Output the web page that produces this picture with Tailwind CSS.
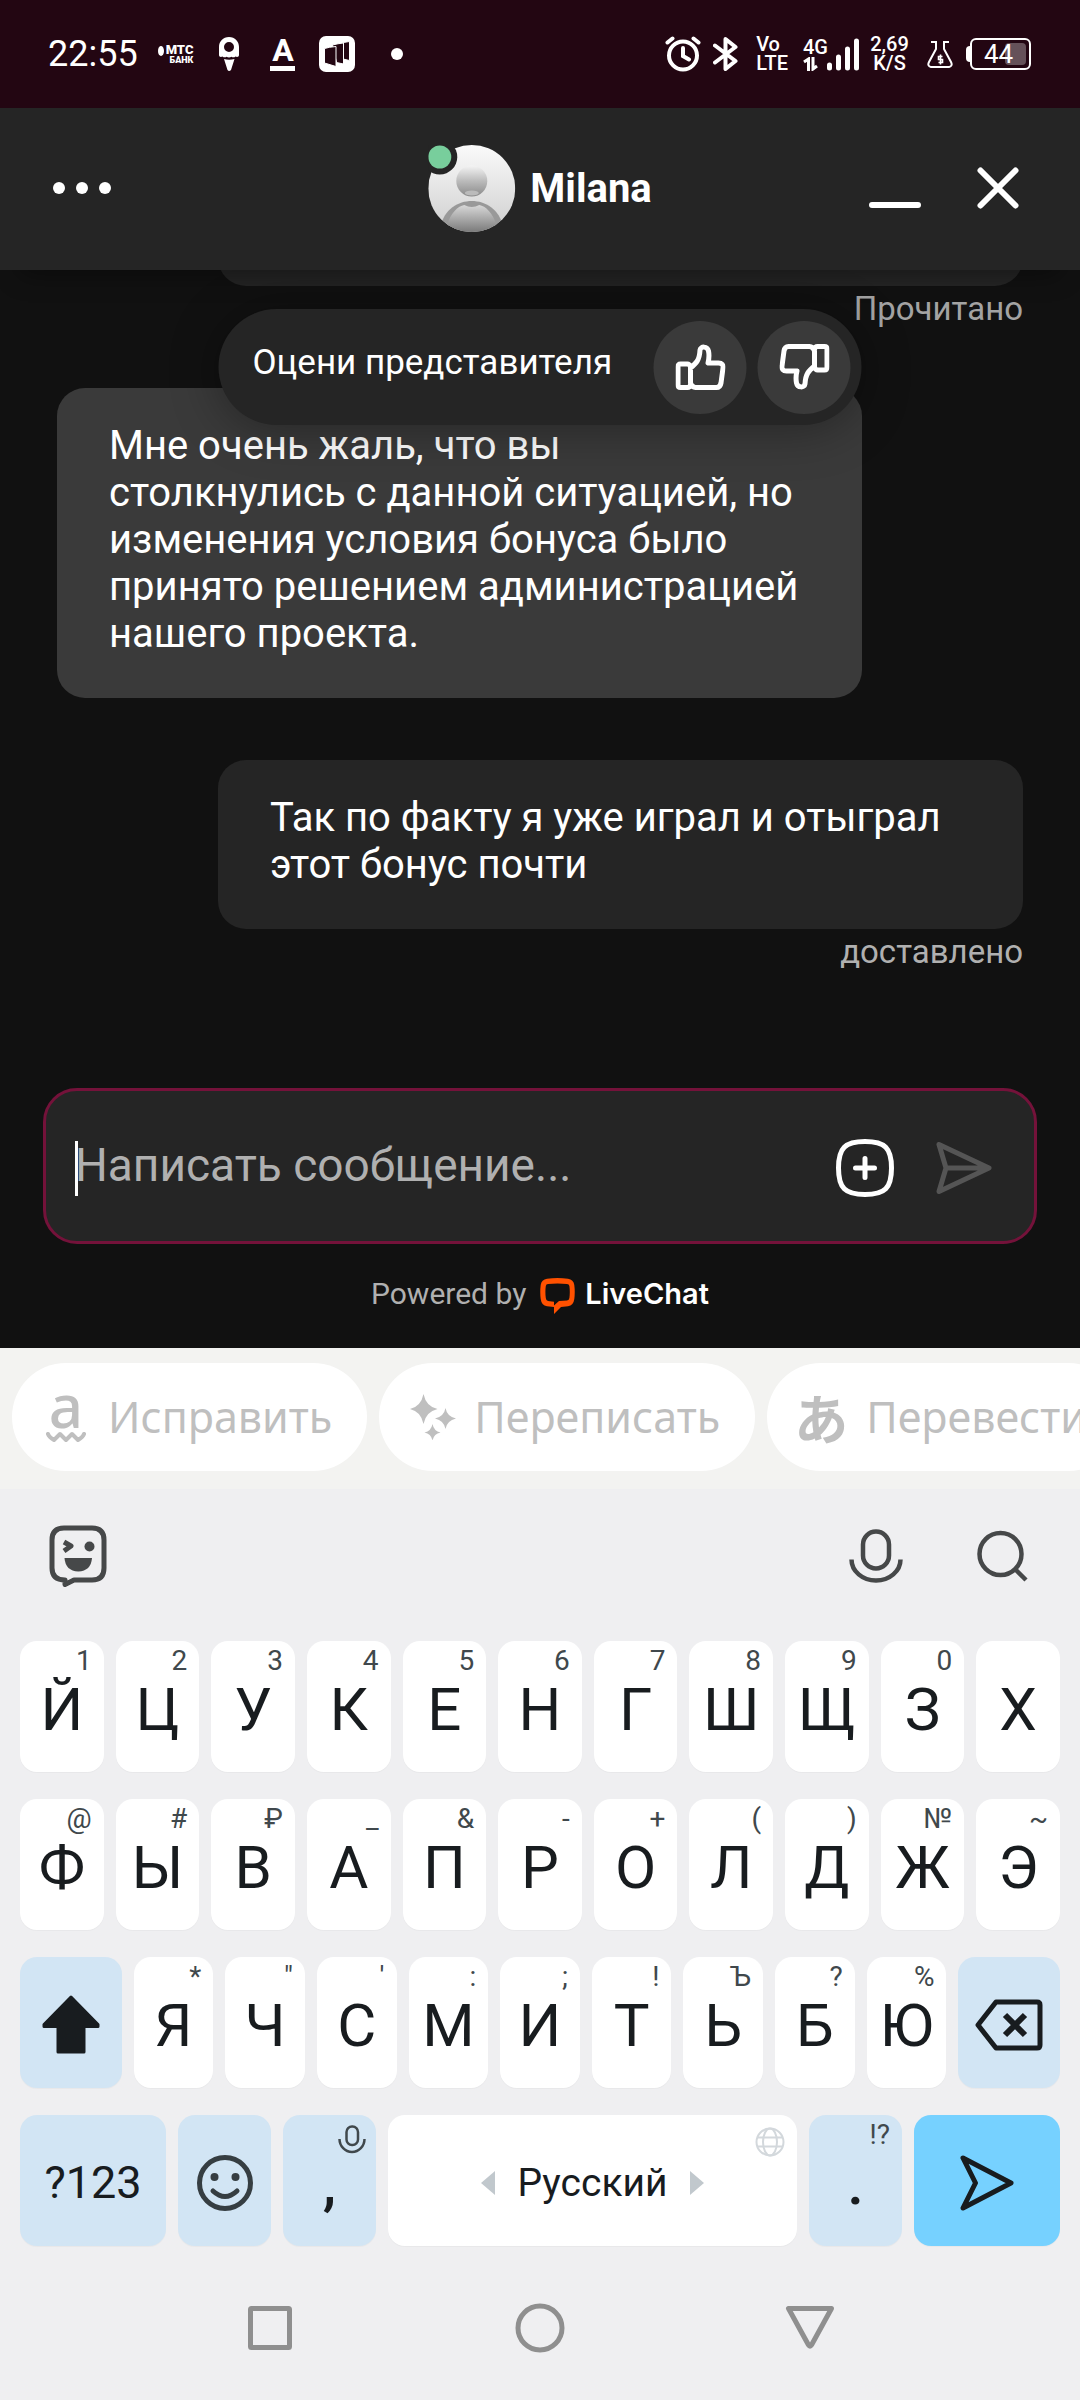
<!DOCTYPE html>
<html lang="ru">
<head>
<meta charset="utf-8">
<meta name="viewport" content="width=device-width, initial-scale=1">
<title>Milana – LiveChat</title>
<script src="https://cdn.jsdelivr.net/npm/@tailwindcss/browser@4"></script>
</head>
<body class="flex min-h-screen flex-col overflow-x-hidden bg-[#efeff1] font-[Roboto,sans-serif]">

<!-- Status bar -->
<div class="flex h-[108px] shrink-0 items-center justify-between bg-[#230612] pr-[49px] pl-12 text-white">
  <div class="flex items-center">
    <span class="mr-5 text-[36px] leading-10">22:55</span>
    <span class="mr-[26px] flex items-start gap-[2px] font-black">
      <svg class="mt-[2px]" width="6" height="10" viewBox="0 0 6 10"><ellipse cx="3" cy="5" rx="3" ry="5" fill="#fff"/></svg>
      <span class="flex flex-col items-end"><span class="text-[13px] leading-3">МТС</span><span class="text-[9px] leading-[9px]">БАНК</span></span>
    </span>
    <svg class="mr-[31px]" width="20" height="34" viewBox="0 0 20 34"><path fill="#fff" fill-rule="evenodd" d="M10 0C4 0 0 4.500 0 10v8c0 2 2 2.500 3.500 1.500 1 1 3 1.200 4 .3 1.500 1 3.500 1 5 0 1 .9 3 .7 4-.3C18 20.500 20 20 20 18v-8C20 4.500 16 0 10 0zm0 5a5 5 0 1 1 0 10 5 5 0 0 1 0-10z"/><path fill="#fff" d="M5 22q5 1.500 10.500 0L12 33q-2 2-3.500 0z"/></svg>
    <span class="mr-6 flex w-[25px] flex-col items-center"><span class="text-[32px] leading-[26px] font-bold">A</span><span class="mt-[3px] h-[5px] w-full bg-white"></span></span>
    <svg class="mr-9" width="36" height="36" viewBox="0 0 36 36"><rect width="36" height="36" rx="7" fill="#fff"/><g fill="#230612" stroke="#fff" stroke-width="1"><path d="M21 7.500Q26 6 30.500 5.500V24.500L24 23z"/><path d="M13.500 9Q19 7.500 24.500 7V28L17.500 26.500z"/><path d="M5.500 12.500Q10 11 17 10.500V30.500L5.500 27z"/></g></svg>
    <span class="size-3 rounded-full bg-white"></span>
  </div>
  <div class="flex items-center font-medium">
    <svg class="mr-3" width="36" height="36" viewBox="0 0 36 36" fill="none" stroke="#fff" stroke-width="4" stroke-linecap="round"><circle cx="18" cy="19.500" r="14"/><path d="M18 12v8l6 3.500M2.500 6.500L7.500 2.500M33.500 6.500L28.500 2.500"/></svg>
    <svg class="mr-[18px]" width="25" height="36" viewBox="0 0 25 36" fill="none" stroke="#fff" stroke-width="4" stroke-linejoin="round" stroke-linecap="round"><path d="M2 9.500L22.500 25 12.500 33V3l10 8L2 26.500"/></svg>
    <span class="mr-[15px] flex flex-col text-[20px] leading-[19px]"><span>Vo</span><span>LTE</span></span>
    <span class="flex h-[34px] w-[56px] items-end">
      <span class="flex w-6 flex-col"><span class="text-[20px] leading-[19px]">4G</span>
        <svg width="15" height="14" viewBox="0 0 15 14" fill="none" stroke="#fff" stroke-width="3"><path d="M5.500 14V2L1 5M10 0v12l4-3"/></svg></span>
      <svg width="32" height="34" viewBox="0 0 32 34" fill="none" stroke="#fff" stroke-width="5" stroke-linecap="round"><path d="M2.500 28v3M11.500 20v11M20.500 12v19M29.500 4v27"/></svg>
    </span>
    <span class="ml-[11px] flex w-[39px] flex-col items-center text-[20px] leading-[19px]"><span>2,69</span><span>K/S</span></span>
    <svg class="ml-[18px]" width="26" height="28" viewBox="0 0 26 28" fill="none" stroke="#fff" stroke-width="2"><path d="M4 2h5v7L2 22q-2 4 2 5h18q4-1 2-5L17 9V2h5"/><path d="M15.500 16.500h-4v3h4v3h-4M13.500 14.500v10" stroke-width="1.600"/></svg>
    <span class="ml-[13px] h-4 w-[4px] rounded-l bg-white"></span>
    <span class="relative flex h-8 w-[61px] items-center justify-center rounded-md border-2 border-white font-normal">
      <span class="absolute top-[3px] right-[3px] h-[22px] w-[21px] rounded-sm bg-white/30"></span>
      <span class="relative mr-1 text-[26px] leading-7">44</span>
    </span>
  </div>
</div>

<!-- Chat -->
<div class="flex grow flex-col bg-[#111]">
  <header class="relative z-10 flex h-[162px] shrink-0 items-center justify-between bg-[#252525] px-[53px] pb-[2px] text-white shadow-[0_24px_24px_-20px_rgba(0,0,0,0.4)]">
    <button aria-label="Меню" class="flex gap-[11px]"><span class="size-3 rounded-full bg-white"></span><span class="size-3 rounded-full bg-white"></span><span class="size-3 rounded-full bg-white"></span></button>
    <div class="absolute left-1/2 flex -translate-x-1/2 items-center gap-[15px]">
      <svg width="87" height="87" viewBox="0 0 87 87">
        <defs>
          <linearGradient id="bg" x2="0" y2="1"><stop stop-color="#fafafa"/><stop offset="1" stop-color="#cfcfcf"/></linearGradient>
          <linearGradient id="hd" x2="0" y2="1"><stop stop-color="#f4f4f4"/><stop offset=".5" stop-color="#bbb"/><stop offset="1" stop-color="#8a8a8a"/></linearGradient>
          <linearGradient id="bd" x2="0" y2="1"><stop stop-color="#d8d8d8"/><stop offset="1" stop-color="#707070"/></linearGradient>
          <clipPath id="c"><circle cx="43.500" cy="43.500" r="43.500"/></clipPath>
        </defs>
        <g clip-path="url(#c)"><rect width="87" height="87" fill="url(#bg)"/>
          <circle cx="43.500" cy="36" r="15.500" fill="url(#hd)"/><ellipse cx="43.500" cy="48" rx="7" ry="2.500" fill="#bbb"/>
          <path d="M12 82C16 64 30 56 43.500 56S71 64 75 82L60 90H26z" fill="#999"/>
          <path d="M19 80C22 68 30 61 36 60q7.500 4 15 0c6 1 14 8 17 20l-10 10H28z" fill="url(#bd)"/></g>
        <circle cx="11.500" cy="12" r="17.500" fill="#252525"/><circle cx="11.500" cy="12" r="11.500" fill="#78ce9c"/>
      </svg>
      <span class="text-[40px] leading-[47px] font-bold">Milana</span>
    </div>
    <div class="flex items-center gap-14 pr-2">
      <button aria-label="Свернуть"><svg width="52" height="42" viewBox="0 0 52 42"><rect y="35" width="52" height="6" rx="3" fill="#fff"/></svg></button>
      <button aria-label="Закрыть"><svg width="42" height="42" viewBox="0 0 42 42" stroke="#fff" stroke-width="6" stroke-linecap="round"><path d="M3.500 3.500l35 35M38.500 3.500l-35 35"/></svg></button>
    </div>
  </header>

  <main class="relative grow overflow-hidden px-[57px] text-[40px] leading-[47px] text-white">
    <div class="-mt-12 ml-auto h-16 w-5/6 rounded-[28px] bg-[#252525]"></div>
    <p class="mt-1 text-right text-[33px] leading-[38px] text-[#a3a3a3]">Прочитано</p>
    <div class="mt-[60px] w-5/6 rounded-[28px] bg-[#3a3a3a] pt-[34px] pr-[58px] pb-[41px] pl-[52px]">Мне очень жаль, что вы столкнулись с данной ситуацией, но изменения условия бонуса было принято решением администрацией нашего проекта.</div>
    <div class="mt-[62px] ml-auto w-5/6 rounded-[28px] bg-[#252525] px-[52px] pt-[34px] pb-[41px]">Так по факту я уже играл и отыграл этот бонус почти</div>
    <p class="mt-1 text-right text-[33px] leading-[38px] text-[#b0b0b0]">доставлено</p>

    <!-- Floating rating prompt -->
    <div class="absolute top-[39px] left-1/2 flex h-[116px] w-[643px] -translate-x-1/2 items-center gap-[11px] rounded-full bg-[#252525] pr-[11px] pl-[34px] shadow-[0_4px_48px_rgba(0,0,0,0.35)]">
      <span class="grow pb-2 text-[35px] leading-10 whitespace-nowrap">Оцени представителя</span>
      <button aria-label="Нравится" class="flex size-[93px] items-center justify-center rounded-full bg-[#3a3a3a]">
        <svg width="50" height="50" viewBox="0 0 50 50" fill="none" stroke="#fff" stroke-width="5" stroke-linejoin="round"><path d="M15 41V26C21 21 24 18 24.500 8c.5-4 7.500-4 8.500 1 1 5 .5 8-.5 12H43c3.500 0 5 2 4.500 5l-2 15c-.5 3-2 4.500-4.500 4.500H20c-2.500 0-4-1.500-5-4.500zM15 25q-1-3-3-3H5q-2.500 0-2.500 3v18q0 2.500 2.500 2.500h7q2.500 0 3-3"/></svg>
      </button>
      <button aria-label="Не нравится" class="flex size-[93px] items-center justify-center rounded-full bg-[#3a3a3a]">
        <svg class="rotate-180" width="50" height="50" viewBox="0 0 50 50" fill="none" stroke="#fff" stroke-width="5" stroke-linejoin="round"><path d="M15 41V26C21 21 24 18 24.500 8c.5-4 7.500-4 8.500 1 1 5 .5 8-.5 12H43c3.500 0 5 2 4.500 5l-2 15c-.5 3-2 4.500-4.500 4.500H20c-2.500 0-4-1.500-5-4.500zM15 25q-1-3-3-3H5q-2.500 0-2.500 3v18q0 2.500 2.500 2.500h7q2.500 0 3-3"/></svg>
      </button>
    </div>
  </main>

  <form class="mx-[43px] flex h-[156px] shrink-0 items-center rounded-[34px] border-[3px] border-[#74123a] bg-[#252525] pt-1 pr-[42px] pl-[29px]">
    <span class="-mr-[3px] h-[55px] w-[3px] bg-white"></span>
    <input type="text" aria-label="Сообщение" placeholder="Написать сообщение..." class="min-w-0 grow bg-transparent pb-[6px] text-[46px] leading-[54px] text-white outline-none placeholder:text-[#b0b0b0]">
    <button type="button" aria-label="Добавить"><svg width="58" height="58" viewBox="0 0 58 58" fill="none" stroke="#fff" stroke-width="5" stroke-linecap="round"><path d="M29 2.500C49 2.500 55.500 9 55.500 29S49 55.500 29 55.500 2.500 49 2.500 29 9 2.500 29 2.500zM29 19.500v19M19.500 29h19"/></svg></button>
    <button type="submit" aria-label="Отправить" class="ml-[42px]"><svg width="56" height="54" viewBox="0 0 56 54" fill="none" stroke="#555" stroke-width="5" stroke-linejoin="round" stroke-linecap="round"><path d="M3 3.500L53 27 3 50.500 10 27zM10 27H52"/></svg></button>
  </form>

  <a href="#" class="flex h-[104px] shrink-0 items-center justify-center pb-1 text-[30px] leading-9 text-[#b0b0b0]">
    <span>Powered by</span>
    <svg class="mt-1 mr-[10px] ml-[14px]" width="35" height="36" viewBox="0 0 35 36"><path fill="#ff5100" fill-rule="evenodd" d="M7 .8Q17.500-.6 28 .8q5.500.7 6.300 6.200.9 7 0 14-.8 6.500-6.300 7.300l-7 .7L14 36v-7l-7-.7Q1.500 27.500.7 21q-.9-7 0-14Q1.500 1.500 7 .8zM8 6q-2 .2-2.200 2-.8 6 0 12 .2 2.500 2.200 3l6 .8v3.700l5-4.500 8-.4q2.200-.3 2.400-2.600.8-6 0-12Q29 6.200 27 6q-9.500-.8-19 0z"/></svg>
    <span class="font-[Inter,sans-serif] text-[29px] font-semibold text-white">LiveChat</span>
  </a>
</div>

<!-- Suggestions -->
<div class="flex h-[141px] shrink-0 gap-3 overflow-hidden bg-[#f3f3f1] pt-[15px] pl-3 font-['Noto_Sans',sans-serif] text-[43px] leading-[54px] whitespace-nowrap text-[#bfbfbf]">
  <button class="flex h-[108px] shrink-0 items-center gap-[22px] rounded-full bg-white pr-[35px] pl-[34px]">
    <span class="flex w-10 flex-col items-center"><span class="-mt-3 text-[60px] leading-[52px] font-medium">a</span>
      <svg width="40" height="12" viewBox="0 0 40 12" fill="none" stroke="#bfbfbf" stroke-width="4" stroke-linejoin="round" stroke-linecap="round"><path d="M2 3q1 3 6 6l6-6 6 6 6-6 6 6q5-3 6-6"/></svg></span>
    Исправить
  </button>
  <button class="flex h-[108px] shrink-0 items-center gap-[18px] rounded-full bg-white pr-[35px] pl-[31px]">
    <svg width="46" height="46" viewBox="0 0 46 46" fill="#bfbfbf"><path d="M13.500 0q2.500 12.500 14 15-11.500 2.500-14 15-2.500-12.500-13.500-15Q11 12.500 13.500 0zM35.500 14q1.500 8.500 10.500 10.500-9 2-10.500 10.500Q34 26.500 25 24.500 34 22.500 35.500 14zM22.500 30q1.300 7 8 8.500-6.700 1.500-8 8-1.300-6.500-8-8 6.700-1.500 8-8.500z"/></svg>
    Переписать
  </button>
  <button class="flex h-[108px] shrink-0 items-center gap-[18px] rounded-full bg-white pr-[35px] pl-[27px]">
    <span class="w-[54px] text-center font-['Noto_Sans_CJK_JP',sans-serif] text-[54px] leading-[54px] font-bold">あ</span>
    Перевести
  </button>
</div>

<!-- Keyboard toolbar -->
<div class="flex h-[152px] shrink-0 items-center pr-[51px] pb-[19px] pl-[49px]">
  <button aria-label="Стикеры"><svg width="58" height="62" viewBox="0 0 58 62" fill="none" stroke="#464849" stroke-width="5" stroke-linejoin="round"><path d="M15 3H43Q55 3 55 15V43Q55 55 43 55H25L16 59.500V55Q3 55 3 43V15Q3 3 15 3z"/><path d="M15 17l7 4-7 5" stroke-width="5"/><g fill="#464849" stroke="none"><circle cx="40.500" cy="21.500" r="5"/><path d="M15.500 33h27.500q-1 13-13.700 13.500Q16.500 46 15.500 33z"/></g></svg></button>
  <button aria-label="Голосовой ввод" class="ml-auto"><svg width="54" height="54" viewBox="0 0 54 54" fill="none" stroke="#464849" stroke-width="4.500"><rect x="14" y="2.500" width="26" height="37" rx="13"/><path d="M2.500 30.500a24.500 21 0 0 0 49 0"/></svg></button>
  <button aria-label="Поиск" class="ml-[74px]"><svg width="52" height="52" viewBox="0 0 52 52" fill="none" stroke="#464849" stroke-width="4.500"><circle cx="23.500" cy="24" r="21"/><path d="M38 39l11 11"/></svg></button>
</div>

<!-- Keys -->
<div class="flex shrink-0 flex-col gap-[27px] px-5 text-[60px] leading-[70px] text-[#181c1f] [&_button]:h-[131px] [&_button]:min-w-0 [&_button]:rounded-[17px] [&_button]:shadow-[0_1px_1px_rgba(0,0,0,0.03)] [&_small]:block [&_small]:h-[34px] [&_small]:pt-1 [&_small]:pr-3 [&_small]:text-right [&_small]:text-[28px] [&_small]:leading-8 [&_small]:text-[#40484c] [&_span]:block [&_span]:h-[97px]">
  <div class="grid grid-cols-11 gap-3 [&>button]:bg-white">
    <button><small>1</small><span>Й</span></button>
    <button><small>2</small><span>Ц</span></button>
    <button><small>3</small><span>У</span></button>
    <button><small>4</small><span>К</span></button>
    <button><small>5</small><span>Е</span></button>
    <button><small>6</small><span>Н</span></button>
    <button><small>7</small><span>Г</span></button>
    <button><small>8</small><span>Ш</span></button>
    <button><small>9</small><span>Щ</span></button>
    <button><small>0</small><span>З</span></button>
    <button><small></small><span>Х</span></button>
  </div>
  <div class="grid grid-cols-11 gap-3 [&>button]:bg-white">
    <button><small>@</small><span>Ф</span></button>
    <button><small>#</small><span>Ы</span></button>
    <button><small>₽</small><span>В</span></button>
    <button><small>_</small><span>А</span></button>
    <button><small>&amp;</small><span>П</span></button>
    <button><small>-</small><span>Р</span></button>
    <button><small>+</small><span>О</span></button>
    <button><small>(</small><span>Л</span></button>
    <button><small>)</small><span>Д</span></button>
    <button><small>№</small><span>Ж</span></button>
    <button><small>~</small><span>Э</span></button>
  </div>
  <div class="grid grid-cols-[102fr_repeat(9,80fr)_102fr] gap-3">
    <button aria-label="Shift" class="flex items-center justify-center bg-[#d2e5f4] pt-1"><svg width="58" height="60" viewBox="0 0 58 60"><path d="M29 2L56 29.500V31.500H42V57H16V31.500H2V29.500z" fill="#181c1f" stroke="#181c1f" stroke-width="3" stroke-linejoin="round"/></svg></button>
    <button class="bg-white"><small>*</small><span>Я</span></button>
    <button class="bg-white"><small>"</small><span>Ч</span></button>
    <button class="bg-white"><small>'</small><span>С</span></button>
    <button class="bg-white"><small>:</small><span>М</span></button>
    <button class="bg-white"><small>;</small><span>И</span></button>
    <button class="bg-white"><small>!</small><span>Т</span></button>
    <button class="bg-white"><small>Ъ</small><span>Ь</span></button>
    <button class="bg-white"><small>?</small><span>Б</span></button>
    <button class="bg-white"><small>%</small><span>Ю</span></button>
    <button aria-label="Удалить" class="flex items-center justify-center bg-[#d2e5f4] pt-1"><svg width="68" height="52" viewBox="0 0 68 52" fill="none" stroke="#181c1f" stroke-width="5" stroke-linejoin="round"><path d="M21 3H62Q65 3 65 6V46Q65 49 62 49H21L3 26z"/><path d="M30 16l20 20M50 16L30 36" stroke-width="6"/></svg></button>
  </div>
  <div class="grid grid-cols-[146fr_93fr_93fr_409fr_93fr_146fr] gap-3">
    <button class="bg-[#d2e5f4] pt-1 text-[45px] leading-[54px]">?123</button>
    <button aria-label="Эмодзи" class="flex items-center justify-center bg-[#d2e5f4] pt-1"><svg width="58" height="58" viewBox="0 0 58 58" fill="none" stroke="#363e42" stroke-width="5"><circle cx="29" cy="29" r="25.500"/><path d="M17 37q12 11 24 0" stroke-linecap="round"/><g fill="#363e42" stroke="none"><circle cx="18.500" cy="23" r="4"/><circle cx="39.500" cy="23" r="4"/></g></svg></button>
    <button class="relative bg-[#d2e5f4]"><svg class="absolute top-[10px] right-[10px]" width="28" height="29" viewBox="0 0 28 29" fill="none" stroke="#40484c" stroke-width="2.500"><rect x="8.500" y="1.500" width="11.500" height="18.500" rx="5.500"/><path d="M1.500 14a12.500 13 0 0 0 25 0"/></svg><small></small><span class="font-medium">,</span></button>
    <button class="relative flex items-center justify-center gap-[22px] bg-white pt-1 text-[39px] leading-[46px]">
      <svg width="14" height="24" viewBox="0 0 14 24"><path d="M14 0v24L0 12z" fill="#c1c8cd"/></svg>Русский<svg width="14" height="24" viewBox="0 0 14 24"><path d="M0 0v24l14-12z" fill="#c1c8cd"/></svg>
      <svg class="absolute top-3 right-3" width="30" height="30" viewBox="0 0 30 30" fill="none" stroke="#d3d8dc" stroke-width="2"><circle cx="15" cy="15" r="13.500"/><ellipse cx="15" cy="15" rx="7" ry="13.500"/><path d="M2.500 10.500h25M2.500 19.500h25"/></svg>
    </button>
    <button class="bg-[#d2e5f4]"><small>!?</small><span class="font-medium">.</span></button>
    <button aria-label="Отправить" class="flex items-center justify-center bg-[#76d1ff] pt-1"><svg width="54" height="56" viewBox="0 0 54 56" fill="none" stroke="#181c1f" stroke-width="5" stroke-linejoin="round"><path d="M3 3L51 28 3 53 15.500 28z"/></svg></button>
  </div>
</div>

<!-- System navigation -->
<nav class="grid h-[154px] shrink-0 grid-cols-3 place-items-center px-[135px] pt-[10px]">
  <button aria-label="Недавние"><svg width="48" height="48" viewBox="0 0 48 48" fill="none" stroke="#8f8f8f" stroke-width="5" stroke-linejoin="round"><rect x="4.500" y="4.500" width="39" height="39" rx="1"/></svg></button>
  <button aria-label="Домой"><svg width="50" height="50" viewBox="0 0 50 50" fill="none" stroke="#8f8f8f" stroke-width="5"><circle cx="25" cy="25" r="22"/></svg></button>
  <button aria-label="Назад"><svg width="50" height="48" viewBox="0 0 50 48" fill="none" stroke="#8f8f8f" stroke-width="5" stroke-linejoin="round"><path d="M3.500 4.500h43L26.500 41q-1.500 2.500-3 0z"/></svg></button>
</nav>
</body>
</html>
